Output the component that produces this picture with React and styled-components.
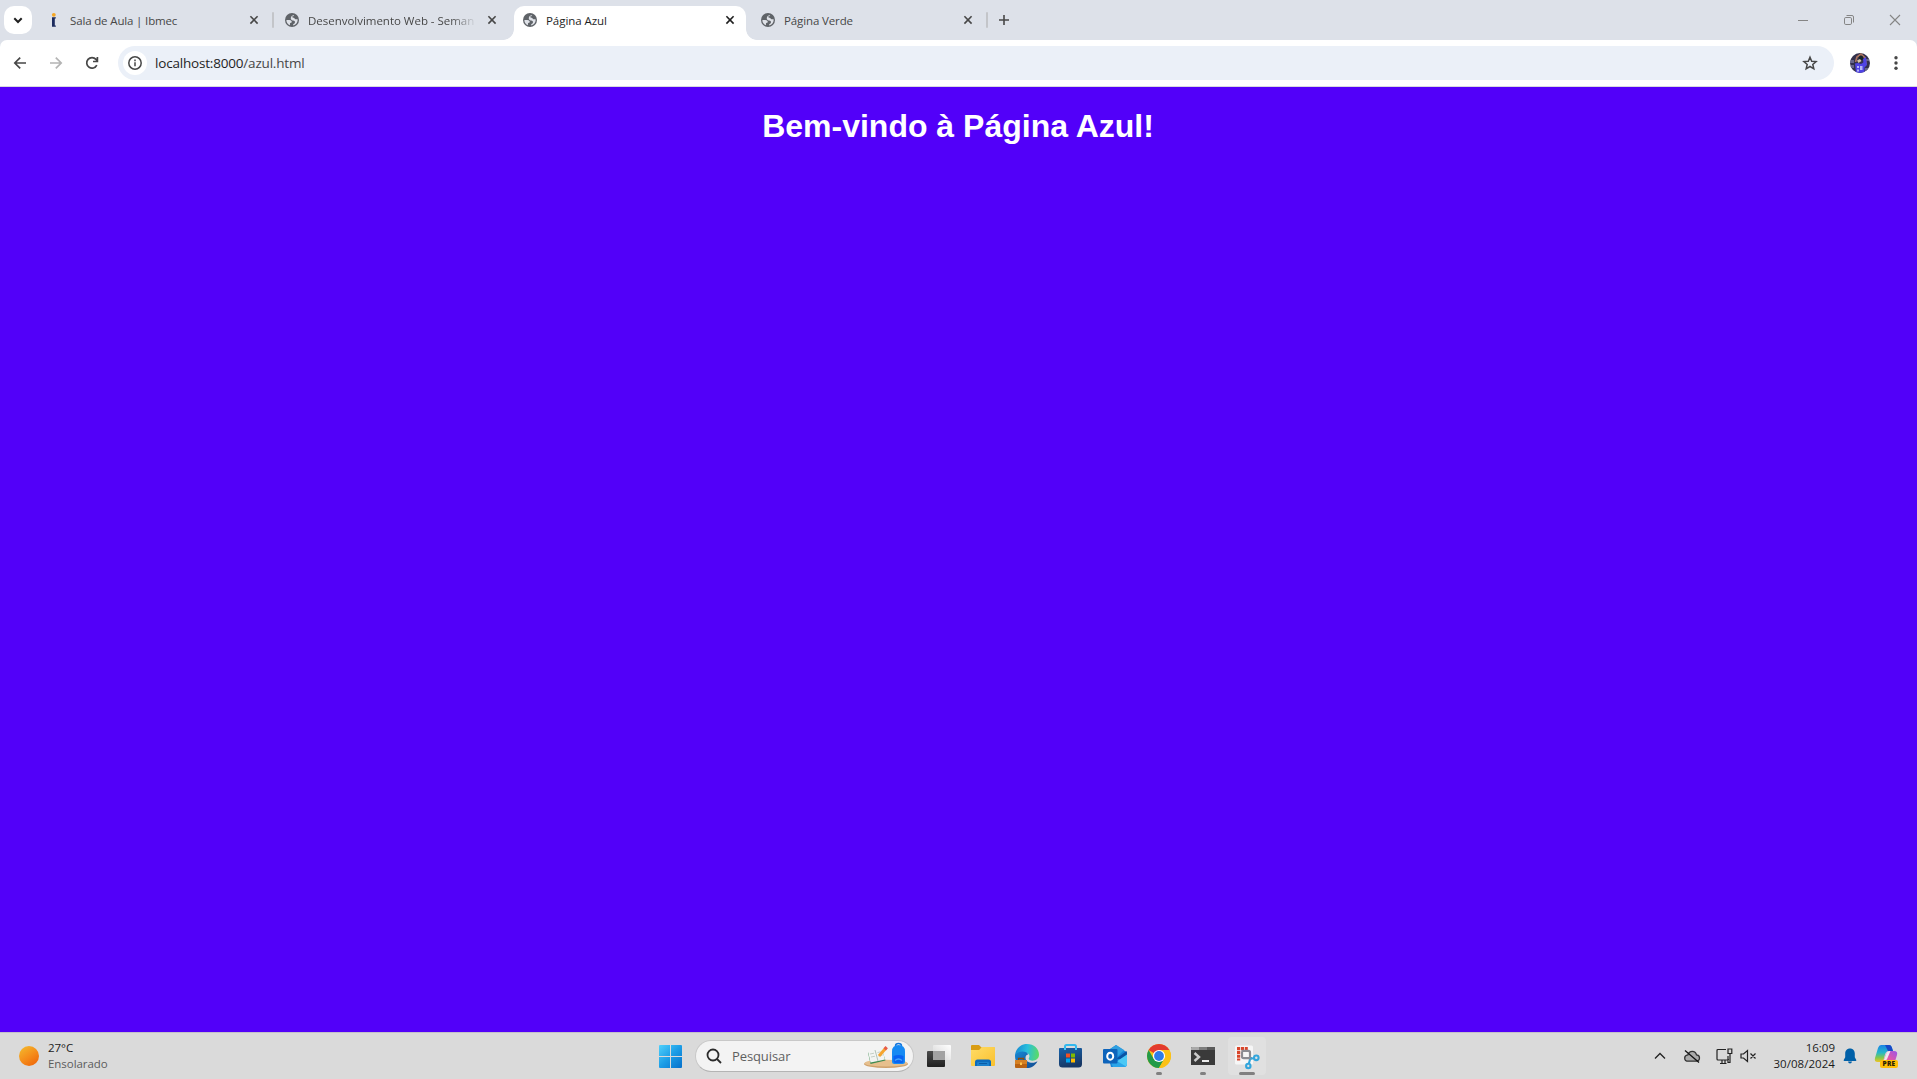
import React from "react";
import styled, { createGlobalStyle } from "styled-components";

const Global = createGlobalStyle`
  * { box-sizing: border-box; }
  body { margin: 0; overflow: hidden; }
  svg { display: block; flex: none; overflow: visible; }
`;

const ui = `"Open Sans", "Noto Sans", sans-serif`;

const Screen = styled.div`
  width: 1917px;
  height: 1079px;
  display: flex;
  flex-direction: column;
  overflow: hidden;
  background: #dde1e9;
  font-family: ${ui};
`;

const TabStrip = styled.header`
  height: 40px;
  flex: none;
  display: flex;
  padding: 6px 9px 0 4px;
  background: #dde1e9;
`;

const TabSearch = styled.div`
  width: 28px;
  height: 28px;
  margin-right: 6px;
  border-radius: 10px;
  background: #fff;
  display: grid;
  place-items: center;
`;

const TabSlot = styled.div`
  width: 238px;
  height: 34px;
  display: flex;
  align-items: flex-start;
`;

const TabBody = styled.div`
  position: relative;
  width: 232px;
  height: 34px;
  padding: 0 8px 6px;
  display: flex;
  align-items: center;
  background: ${(p) => (p.$active ? "#fff" : "transparent")};
  border-radius: 10px 10px 0 0;
  color: ${(p) => (p.$active ? "#1f1f1f" : "#474747")};

  &::before,
  &::after {
    content: "";
    display: ${(p) => (p.$active ? "block" : "none")};
    position: absolute;
    bottom: 0;
    width: 11px;
    height: 11px;
  }
  &::before {
    left: -11px;
    background: radial-gradient(circle at 0 0, transparent 10.5px, #fff 11.2px);
  }
  &::after {
    right: -11px;
    background: radial-gradient(circle at 100% 0, transparent 10.5px, #fff 11.2px);
  }
`;

const TabTitle = styled.span`
  flex: 1;
  min-width: 0;
  margin: 1px 8px 0 8px;
  height: 18px;
  line-height: 18px;
  white-space: nowrap;
  font-size: 11.5px;
  letter-spacing: ${(p) => p.$spacing || 0}px;
  mask-image: ${(p) => (p.$fade ? "linear-gradient(to right, #000 143px, transparent 169px)" : "none")};
`;

const Separator = styled.i`
  width: 2px;
  height: 16px;
  margin: 6px 0 0 2px;
  border-radius: 1px;
  background: ${(p) => (p.$hidden ? "transparent" : "#c3c5c9")};
`;

const NewTab = styled.div`
  height: 28px;
  width: 28px;
  display: grid;
  place-items: center;
`;

const WindowControls = styled.div`
  margin-left: auto;
  height: 28px;
  display: flex;
  align-items: center;
  gap: 30px;
  padding-right: 5px;
`;

const Toolbar = styled.div`
  height: 47px;
  flex: none;
  display: flex;
  align-items: center;
  padding: 0 11px 1px 12px;
  background: #fff;
  border-bottom: 1px solid #d8d8e0;
  border-radius: 7px 7px 0 0;
`;

const NavButtons = styled.nav`
  display: flex;
  gap: 20px;
  margin-right: 18px;
`;

const AddressBar = styled.div`
  flex: 1;
  height: 34px;
  padding: 0 16px 0 5px;
  border-radius: 17px;
  background: #ebf0f8;
  display: flex;
  align-items: center;
`;

const SiteInfo = styled.div`
  width: 24px;
  height: 24px;
  border-radius: 50%;
  background: #fff;
  display: grid;
  place-items: center;
`;

const Url = styled.span`
  flex: 1;
  margin-left: 8px;
  font-size: 13.5px;
  line-height: 20px;
  color: #474747;
  letter-spacing: -0.19px;
  b {
    font-weight: 400;
    color: #1f1f1f;
  }
`;

const Profile = styled.div`
  margin: 0 16px;
`;

const Page = styled.main`
  flex: 1;
  background: #5200f9;
  display: flow-root;
  text-align: center;
`;

const Heading = styled.h1`
  margin: 21px 1px 0 0;
  font: 700 32px/36px "Liberation Sans", Arial, sans-serif;
  color: #fff;
`;

const Taskbar = styled.footer`
  height: 47px;
  flex: none;
  display: flex;
  align-items: center;
  border-top: 1px solid #c3c0ca;
  background: #dadada;
  padding-right: 19px;
`;

const Weather = styled.div`
  width: 659px;
  padding-left: 19px;
  display: flex;
  align-items: center;
  gap: 9px;
`;

const Sun = styled.i`
  width: 20px;
  height: 20px;
  border-radius: 50%;
  background: linear-gradient(145deg, #f3b62c 8%, #f58e1b 50%, #ee6309 95%);
`;

const Lines = styled.div`
  display: flex;
  flex-direction: column;
  align-items: ${(p) => p.$align || "flex-start"};
  font-size: 11.5px;
  line-height: 16px;
`;

const Line = styled.span`
  color: ${(p) => (p.$muted ? "#5c5c5c" : "#1b1b1b")};
  letter-spacing: ${(p) => p.$spacing || 0}px;
`;

const SearchBox = styled.div`
  width: 219px;
  height: 32px;
  margin: 0 3px 0 13px;
  padding: 0 5px 0 10px;
  border: 1px solid #c8c8c8;
  border-bottom-color: #b4b4b4;
  border-radius: 16px;
  background: #f3f3f3;
  display: flex;
  align-items: center;
`;

const SearchText = styled.span`
  flex: 1;
  margin-left: 10px;
  font-size: 13px;
  color: #5f5f5f;
  letter-spacing: -0.1px;
`;

const Apps = styled.div`
  display: flex;
  height: 100%;
  align-items: center;
`;

const AppButton = styled.div`
  width: ${(p) => (p.$active ? 38 : 44)}px;
  margin: ${(p) => (p.$active ? "0 3px" : 0)};
  height: 38px;
  padding-top: 7px;
  display: flex;
  flex-direction: column;
  align-items: center;
  border-radius: 4px;
  background: ${(p) => (p.$active ? "#e0e0e0" : "transparent")};
  &::after {
    content: "";
    width: ${(p) => p.$bar || 0}px;
    height: 3px;
    margin-top: 4px;
    border-radius: 1.5px;
    background: #808080;
  }
`;

const Tray = styled.div`
  margin-left: auto;
  display: flex;
  align-items: center;
`;

const TrayItem = styled.div`
  margin-right: ${(p) => p.$gap}px;
`;

const CloseIcon = ({ color = "#474747" }) => (
  <svg width="16" height="16" viewBox="0 0 16 16">
    <path d="M4.4 4.200l7.200 7.400M11.600 4.200l-7.200 7.400" stroke={color} strokeWidth="1.600" />
  </svg>
);

const GlobeIcon = () => (
  <svg width="16" height="16" viewBox="0 0 16 16">
    <circle cx="8" cy="8" r="7" fill="#5f6368" />
    <path
      d="M10.200 3.200C10 4.300 8.800 4 8.300 4.600 7.900 5.200 8.600 5.700 9.500 5.800 10.800 6 10.500 7.300 11.500 7.300H13.600C13.800 9 13.200 10.600 12.200 11.700 11.500 12.600 10.400 13.200 9.200 13.500V12.200C10.300 12 11 11.200 11 10.100 11 9.100 10.200 8.600 9.200 8.500 8 8.400 7.400 7.800 7 7.200 6.500 6.400 6.900 5 7.500 4.200 8.100 3.400 9.200 3.200 10.200 3.200Z"
      fill="#dfe2e8"
    />
    <path d="M2.400 7.900H5.400C6.800 7.900 7.800 8.700 7.800 9.800 7.800 10.700 6.900 10.900 6.300 11 5.800 11.100 6 12 6 13.200 3.800 12.500 2.300 10.500 2.400 7.900Z" fill="#dfe2e8" />
  </svg>
);

const IbmecIcon = () => (
  <svg width="16" height="16" viewBox="0 0 16 16">
    <circle cx="7.800" cy="2.800" r="1.900" fill="#f5a623" />
    <path d="M6 5.300h3.800v1.200H8.800v7h1v1.300H6Z" fill="#1c2b5e" />
  </svg>
);

const Glyph = ({ size = 16, color = "#474747", w = 1.7, children }) => (
  <svg width={size} height={size} viewBox={`0 0 ${size} ${size}`} fill="none" stroke={color} strokeWidth={w}>
    {children}
  </svg>
);

const AvatarIcon = () => (
  <svg width="20" height="20" viewBox="0 0 20 20">
    <defs>
      <clipPath id="face"><circle cx="10" cy="10" r="10" /></clipPath>
    </defs>
    <g clipPath="url(#face)">
      <path d="M0 0h20v20H0Z" fill="#33314c" />
      <path d="M0 7h4v3H0ZM1 12h3v3H1ZM15 6h4v2h-4ZM15 15h4v3h-4Z" fill="#66658a" />
      <path d="M5.500 9l1.500-5 4-3 4 4 1 6" fill="none" stroke="#a9735f" strokeWidth="1.700" />
      <circle cx="11" cy="5" r="2.300" fill="#16242a" />
      <path d="M7 7.500l3-1.500 1.500 2-3 2Z" fill="#d6c5a6" />
      <path d="M13 6l3-2 1 8-3 3ZM5 10.500l3-.5 3 1 3-2 1.500-3 1 6-2 2v6H6l-.5-5Z" fill="#4f43e4" />
      <path d="M7 13h2v2H7ZM10 13h2.500v4H10ZM7 16.500h2v2H7Z" fill="#b6b6f7" />
    </g>
  </svg>
);

const StartIcon = () => (
  <svg width="23" height="23" viewBox="0 0 23 23">
    <defs>
      <linearGradient id="win" x1="0" y1="0" x2="23" y2="23" gradientUnits="userSpaceOnUse">
        <stop stopColor="#4fd0fb" /><stop offset=".5" stopColor="#1c9de6" /><stop offset="1" stopColor="#0670cb" />
      </linearGradient>
    </defs>
    <path d="M1 0h10v11H0V1Q0 0 1 0ZM12 0h10q1 0 1 1v10H12ZM0 12h11v11H1Q0 23 0 22ZM12 12h11v10q0 1-1 1H12Z" fill="url(#win)" />
  </svg>
);

const SchoolArt = () => (
  <svg width="44" height="26" viewBox="0 0 44 26">
    <ellipse cx="22" cy="21" rx="22" ry="4" fill="#cfa06a" />
    <ellipse cx="22" cy="20.200" rx="21.500" ry="3.400" fill="#e6bf8d" />
    <path d="M4 9.500l14-2.500 3.500 10.500L6.500 21Z" fill="#3f8b50" />
    <path d="M4 8.500l7-1.500 3 11-7.500 1.500ZM11 7l7-1 3 10.500-7 1.500Z" fill="#f2f4f2" />
    <path d="M6 11l4-.8M7 14l4-.8M13.500 9.500l3-.6M14.500 13l4-.8" stroke="#b9c4ba" strokeWidth=".8" />
    <path d="M11 7l3 11" stroke="#a3b5a6" strokeWidth=".8" />
    <path d="M15 13l6.500-7.500" stroke="#f6a52e" strokeWidth="3" />
    <path d="M20.700 6.400l2-2.300" stroke="#e75c48" strokeWidth="3.200" />
    <path d="M31.500 3q0-2.500 3-2.500t3 2.500" fill="none" stroke="#1476dc" strokeWidth="1.500" />
    <path d="M28 8.500q0-6.500 6.500-6.500T41 8.500v10q0 2.500-2.500 2.500h-8Q28 21 28 18.500Z" fill="#168af3" />
    <path d="M29.500 13q5-2 10 0v5q0 2-2 2h-6q-2 0-2-2Z" fill="#0963f2" />
    <path d="M31 17.500q3.500-3 7 0" stroke="#45a4fa" fill="none" strokeWidth="1.300" />
  </svg>
);

const TaskViewIcon = () => (
  <svg width="24" height="24" viewBox="0 0 24 24">
    <defs>
      <linearGradient id="tv" x2="0" y2="1"><stop stopColor="#4b4b4b" /><stop offset="1" stopColor="#202020" /></linearGradient>
      <linearGradient id="tw" x1="0" y1="1" x2="1" y2="0"><stop stopColor="#d3d3d3" /><stop offset="1" stopColor="#fff" /></linearGradient>
    </defs>
    <rect y="7" width="18" height="16" rx="1" fill="url(#tv)" />
    <rect x="6" y="1" width="18" height="15" rx="1" fill="url(#tw)" />
    <path d="M6 7h12v9H6Z" fill="#a2a2a2" />
  </svg>
);

const FolderIcon = () => (
  <svg width="24" height="24" viewBox="0 0 24 24">
    <defs><linearGradient id="fo" x2="1" y2="1"><stop stopColor="#ffdc67" /><stop offset="1" stopColor="#f9c02e" /></linearGradient></defs>
    <path d="M0 2q0-1 1-1h7l2.500 2.500H23q1 0 1 1V8H0Z" fill="#d99c13" />
    <path d="M0 6h8l3-3h12q1 0 1 1v17q0 1-1 1H1q-1 0-1-1Z" fill="url(#fo)" />
    <path d="M4 22v-4q0-2.500 2.500-2.500h11Q20 15.500 20 18v4Z" fill="#0d6bbd" />
    <path d="M6 22v-3q0-1 1-1h10q1 0 1 1v3Z" fill="#1b80cc" />
    <path d="M8 19.500h8" stroke="#0b5ba6" />
  </svg>
);

const EdgeIcon = () => (
  <svg width="24" height="24" viewBox="0 0 24 24">
    <defs>
      <linearGradient id="eg" x1="0" y1=".4" x2="1" y2=".5"><stop stopColor="#1789d2" /><stop offset=".5" stopColor="#29bfdc" /><stop offset="1" stopColor="#5cdb64" /></linearGradient>
      <linearGradient id="eb" x2="1" y2="1"><stop stopColor="#1787d4" /><stop offset="1" stopColor="#114a90" /></linearGradient>
    </defs>
    <path d="M0 11C1 4 6 0 12 0c7 0 12 4.800 12 10.500 0 4-3 6.200-6.500 6.200-2.800 0-4.300-1.200-3.600-2.600 1.300-2.300.3-4.900-3-5.100C7 8.500 2 10 0 13Z" fill="url(#eg)" />
    <path d="M0 12c2-6 12-5.500 13.300-1.500C9 11 9.500 18 16 18.700c3 .3 5-.5 6.500-1.500C20 22 16 24 12 24 5 24 0 19 0 12Z" fill="url(#eb)" />
    <path d="M3.500 16v-1.500h5V16" fill="none" stroke="#8b4a0c" strokeWidth="1.300" />
    <rect y="16" width="12" height="8" rx="1" fill="#b96212" />
    <path d="M0 17q0-1 1-1h10q1 0 1 1v3H0Z" fill="#d68022" />
    <rect x="5" y="18.500" width="2" height="2.500" fill="#ffc44b" />
  </svg>
);

const StoreIcon = () => (
  <svg width="24" height="24" viewBox="0 0 24 24">
    <defs><linearGradient id="st" x2=".3" y2="1"><stop stopColor="#1764ad" /><stop offset="1" stopColor="#173764" /></linearGradient></defs>
    <path d="M6 6V2.500Q6 1 7.500 1h8Q17 1 17 2.500V6" fill="none" stroke="#32b8ee" strokeWidth="2" />
    <path d="M0 5q0-1 1-1h21q1 0 1 1v15q0 3.500-3.500 3.500h-16Q0 23.500 0 20Z" fill="url(#st)" />
    <path d="M6 4v2M17 4v2" stroke="#42c8f6" strokeWidth="2" />
    <path d="M7 9.500h4v4H7Z" fill="#f25022" /><path d="M12 9.500h4v4h-4Z" fill="#7fba00" />
    <path d="M7 14.500h4v4H7Z" fill="#00a4ef" /><path d="M12 14.500h4v4h-4Z" fill="#ffb900" />
  </svg>
);

const OutlookIcon = () => (
  <svg width="24" height="24" viewBox="0 0 24 24">
    <path d="M4 7l9-6 9 6q2 1 2 2v11q0 3-3 3H8Z" fill="#1684d8" />
    <path d="M5 6.500l8-5.500 8 5-7 7Z" fill="#2f9fe0" />
    <path d="M13 15l10.500-8 .5 2v6H14Z" fill="#0a53a4" />
    <path d="M10 20l14-9.500V20q0 3-3 3H10Z" fill="#4bc8f5" />
    <path d="M8 19l6-2 9 5.500q-1 .5-2 .5H10Z" fill="#2aa5e9" />
    <rect y="5" width="14.500" height="14.500" rx="1" fill="#0d64bb" />
    <ellipse cx="7.200" cy="12.200" rx="3" ry="3.500" fill="none" stroke="#fff" strokeWidth="2" />
  </svg>
);

const ChromeIcon = () => (
  <svg width="24" height="24" viewBox="0 0 24 24">
    <circle cx="12" cy="12" r="12" fill="#fbc116" />
    <path d="M12 12L1.610 6A12 12 0 0 1 22.390 6Z" fill="#e33b2e" />
    <path d="M1.610 6A12 12 0 0 0 12 24L17.200 15 12 12 6.800 15Z" fill="#229a48" />
    <path d="M12 6h10.390A12 12 0 0 1 12 24l5.200-9Z" fill="#fbc116" />
    <circle cx="12" cy="12" r="6.100" fill="#fff" />
    <circle cx="12" cy="12" r="4.900" fill="#2f7ce9" />
  </svg>
);

const TerminalIcon = () => (
  <svg width="24" height="24" viewBox="0 0 24 24">
    <path d="M0 4q0-1 1-1h22q1 0 1 1v17H0Z" fill="#3a3a3a" />
    <path d="M0 4q0-1 1-1h7v3H0Z" fill="#a9a9a9" /><path d="M8 3h8v3H8Z" fill="#7d7d7d" /><path d="M16 3h7q1 0 1 1v2h-8Z" fill="#5a5a5a" />
    <path d="M3.500 9l4.500 4-4.500 4" fill="none" stroke="#ccc" strokeWidth="2.400" />
    <path d="M11 17h7" stroke="#fff" strokeWidth="1.800" />
  </svg>
);

const SnipIcon = () => (
  <svg width="24" height="24" viewBox="0 0 24 24">
    <rect width="18" height="19" x="0" y="1.500" rx="1.500" fill="#f6f6f6" />
    <path d="M2 3h3.200v3.200H2ZM6 3h3v3.200H6ZM9.800 3h3v3.200h-3ZM2 7h3.200v3H2ZM2 10.800h3.200v3H2ZM2 14.500h3.200v2H2Z" fill="#d9452a" />
    <path d="M6.500 6.800h6.800q1.700 0 1.700 1.700V16M7 7.500v5q0 1.700 1.700 1.700H17" fill="none" stroke="#8c8c92" strokeWidth="2.200" />
    <circle cx="21.300" cy="13.800" r="2.300" fill="none" stroke="#32a5dc" strokeWidth="2.100" />
    <circle cx="13.300" cy="22" r="2.200" fill="none" stroke="#32a5dc" strokeWidth="2.100" />
    <path d="M15 15.500l-1.200 4.300M15.500 14.600L19 14.200" stroke="#32a5dc" strokeWidth="2.100" />
  </svg>
);

const BellIcon = () => (
  <svg width="14" height="16" viewBox="0 0 14 16">
    <path d="M7 .5c3 0 4.800 2.200 4.800 5v3.700L13.300 12q.3 1-.7 1H1.400q-1 0-.7-1l1.500-2.800V5.500C2.200 2.700 4 .5 7 .5ZM5 13.600h4Q8.700 15.500 7 15.500T5 13.600Z" fill="#0060a8" />
  </svg>
);

const CopilotBox = styled.div`
  position: relative;
  width: 24px;
  height: 24px;
`;

const PreBadge = styled.span`
  position: absolute;
  left: 6px;
  top: 16px;
  width: 18px;
  height: 8px;
  border-radius: 2px;
  background: #ffbf0a;
  color: #2a2205;
  font: 800 6.5px/8px ${ui};
  letter-spacing: 0.3px;
  text-align: center;
`;

const CopilotIcon = () => (
  <svg width="24" height="24" viewBox="0 0 24 24">
    <defs>
      <linearGradient id="ca" x2="0" y2="1"><stop stopColor="#1b83e5" /><stop offset=".45" stopColor="#25b7c9" /><stop offset=".75" stopColor="#83c94b" /><stop offset="1" stopColor="#f0c324" /></linearGradient>
      <linearGradient id="cb" x1="1" y1="0" x2="0" y2="1"><stop stopColor="#9b56e8" /><stop offset=".5" stopColor="#e457a4" /><stop offset="1" stopColor="#fa8f63" /></linearGradient>
    </defs>
    <path d="M7 1h8q2 0 2.700 2L19 7h-4q-3 0-4 3.500L9.500 16q-.7 2-3 2H3.500Q0 18 1 14L4 4q1-3 3-3Z" fill="url(#ca)" />
    <path d="M11 1h4q2 0 2.700 2L19 7h-5Z" fill="#1749c7" />
    <path d="M15 7h5q4 0 3 4l-2.500 8q-1 3-4 3H9q-2 0-2.500-2L6 18q3 0 4-3l2-5q1-3 3-3Z" fill="url(#cb)" />
    <path d="M12.500 9q1-2 3-2h1l-3 7q-1 3-4 3Z" fill="#eee9ef" />
  </svg>
);

const tabs = [
  { title: "Sala de Aula | Ibmec", icon: <IbmecIcon />, spacing: -0.15 },
  { title: "Desenvolvimento Web - Seman", icon: <GlobeIcon />, fade: true, noSep: true, spacing: -0.02 },
  { title: "Página Azul", icon: <GlobeIcon />, active: true, noSep: true, spacing: -0.05 },
  { title: "Página Verde", icon: <GlobeIcon />, spacing: -0.12 },
];

const apps = [
  { icon: <TaskViewIcon /> },
  { icon: <FolderIcon /> },
  { icon: <EdgeIcon /> },
  { icon: <StoreIcon /> },
  { icon: <OutlookIcon /> },
  { icon: <ChromeIcon />, bar: 6 },
  { icon: <TerminalIcon />, bar: 6 },
  { icon: <SnipIcon />, bar: 16, active: true },
];

export default function App() {
  return (
    <Screen>
      <Global />
      <TabStrip>
        <TabSearch>
          <Glyph w={2} color="#1f1f1f"><path d="M4.300 6.300L8 10l3.700-3.700" /></Glyph>
        </TabSearch>
        {tabs.map((t) => (
          <TabSlot key={t.title}>
            <TabBody $active={t.active}>
              {t.icon}
              <TabTitle $fade={t.fade} $spacing={t.spacing}>{t.title}</TabTitle>
              <CloseIcon color={t.active ? "#1f1f1f" : "#474747"} />
            </TabBody>
            <Separator $hidden={t.noSep} />
          </TabSlot>
        ))}
        <NewTab>
          <Glyph w={1.6}><path d="M8 3v10M3 8h10" /></Glyph>
        </NewTab>
        <WindowControls>
          <Glyph w={1} color="#858585"><path d="M3 8.500h10" /></Glyph>
          <Glyph w={1} color="#858585">
            <rect x="3.500" y="5.500" width="7" height="7" rx="1.300" />
            <path d="M5.500 3.500h5.500q1.500 0 1.500 1.500v5.500" />
          </Glyph>
          <Glyph w={1.1} color="#858585"><path d="M3 3l10 10M13 3L3 13" /></Glyph>
        </WindowControls>
      </TabStrip>
      <Toolbar>
        <NavButtons>
          <Glyph><path d="M14 8H3M8.200 2.600L2.800 8l5.400 5.400" /></Glyph>
          <Glyph color="#b4b4b4"><path d="M2 8h11M7.800 2.600L13.200 8l-5.400 5.400" /></Glyph>
          <Glyph><path d="M12.800 10.200A5.300 5.300 0 1 1 12 4.400L13.400 6M13.400 2v4.500H9" /></Glyph>
        </NavButtons>
        <AddressBar>
          <SiteInfo>
            <Glyph w={1.5}><circle cx="8" cy="8" r="6.200" /><path d="M8 7.200v4M8 4.600v1.600" /></Glyph>
          </SiteInfo>
          <Url><b>localhost:8000</b>/azul.html</Url>
          <Glyph w={1.5}><path d="M8 2.200l1.700 4 4.400.4-3.300 2.900 1 4.300L8 11.500l-3.800 2.300 1-4.300L1.900 6.600l4.400-.4Z" /></Glyph>
        </AddressBar>
        <Profile><AvatarIcon /></Profile>
        <Glyph size={20} w={0}>
          <circle cx="10" cy="4.700" r="1.700" fill="#474747" /><circle cx="10" cy="10" r="1.700" fill="#474747" /><circle cx="10" cy="15.300" r="1.700" fill="#474747" />
        </Glyph>
      </Toolbar>
      <Page>
        <Heading>Bem-vindo à Página Azul!</Heading>
      </Page>
      <Taskbar>
        <Weather>
          <Sun />
          <Lines>
            <Line $spacing={-0.05}>27°C</Line>
            <Line $muted $spacing={-0.05}>Ensolarado</Line>
          </Lines>
        </Weather>
        <StartIcon />
        <SearchBox>
          <Glyph w={1.8} color="#2b2b2b"><circle cx="7" cy="7" r="5.500" /><path d="M11 11l4 4" /></Glyph>
          <SearchText>Pesquisar</SearchText>
          <SchoolArt />
        </SearchBox>
        <Apps>
          {apps.map((a, i) => (
            <AppButton key={i} $bar={a.bar} $active={a.active}>{a.icon}</AppButton>
          ))}
        </Apps>
        <Tray>
          <TrayItem $gap={16}>
            <Glyph w={1.3} color="#222"><path d="M3 10.500l5-5 5 5" /></Glyph>
          </TrayItem>
          <TrayItem $gap={16}>
            <Glyph w={1.300} color="#333">
              <path d="M4.300 13.200q-3.600 0-3.600-3.200 0-2.800 3.200-3.200Q5 3.300 8.300 3.300T12.500 6.800q3 .2 3 3.200t-3.300 3.200Z" fill="#aaa" />
              <path d="M1 2.500l14 12" stroke="#111" />
            </Glyph>
          </TrayItem>
          <TrayItem $gap={7}>
            <Glyph size={17} w={1.200} color="#222">
              <path d="M10 1.500H2q-1 0-1 1v8.500q0 1 1 1h9.500q1 0 1-1M4 15.500h6.500M6 12v3.500M9 12v3.500M12 1h3.800v4.500H12ZM14 5.500v9h-2V8" />
            </Glyph>
          </TrayItem>
          <TrayItem $gap={17}>
            <Glyph w={1.200} color="#222"><path d="M1 6h2.500L7.500 2.500v11L3.500 10H1ZM10.500 5.500l5 5M15.500 5.500l-5 5" /></Glyph>
          </TrayItem>
          <TrayItem $gap={8}>
            <Lines $align="flex-end"><Line>16:09</Line><Line $spacing={0.05}>30/08/2024</Line></Lines>
          </TrayItem>
          <TrayItem $gap={17}><BellIcon /></TrayItem>
          <CopilotBox><CopilotIcon /><PreBadge>PRE</PreBadge></CopilotBox>
        </Tray>
      </Taskbar>
    </Screen>
  );
}
